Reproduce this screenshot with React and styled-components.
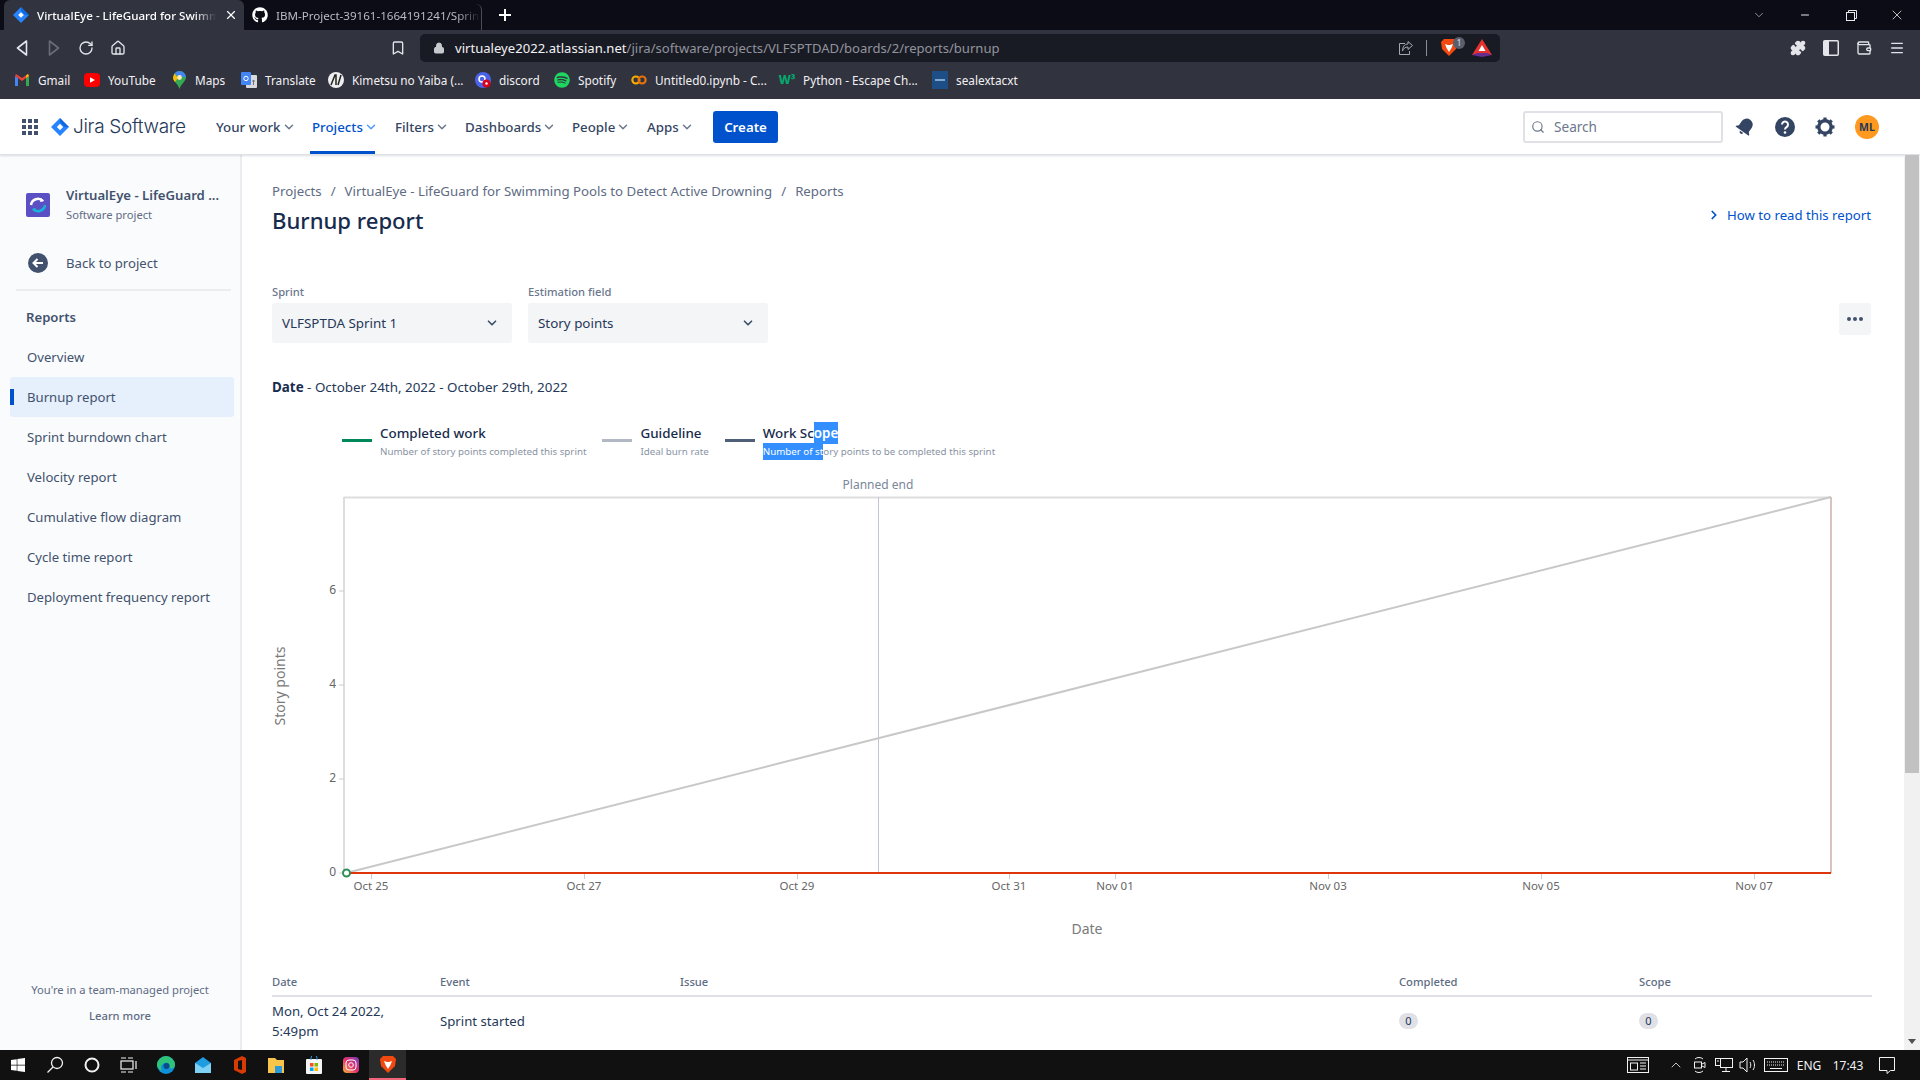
import React from 'react'
import styled, { createGlobalStyle } from 'styled-components'
import { FaGithub, FaSpotify, FaWindows } from 'react-icons/fa'
import { ChevronDown, ChevronRight, Minus, X, Search, RotateCw, Home, Bookmark, Lock, Puzzle, Wallet, Menu } from 'lucide-react'

const GlobalStyle = createGlobalStyle`
  html, body { margin: 0; height: 100%; overflow: hidden; background: #fff; }
  #root { height: 100%; }
  * { box-sizing: border-box; }
  body { font-family: "Noto Sans", "Open Sans", "Liberation Sans", sans-serif; color: #172b4d; }
`

const Page = styled.div`
  height: 1080px;
  display: flex;
  flex-direction: column;
  font-size: 13.4px;
`

/* browser chrome */
const TabStrip = styled.div`
  height: 30px;
  background: #0b0c15;
  display: flex;
  align-items: flex-end;
  padding-left: 4px;
  color: #fff;
  font-size: 11.6px;
`
const Tab = styled.div`
  width: ${p => p.$w}px;
  height: ${p => (p.$active ? 30 : 26)}px;
  border-radius: 6px 6px 0 0;
  background: ${p => (p.$active ? '#31333f' : 'transparent')};
  color: ${p => (p.$active ? '#fff' : '#b9bbc4')};
  display: flex;
  align-items: center;
  gap: 8px;
  padding: ${p => (p.$active ? '0 6px 0 9px' : '0 0 4px 8px')};
  white-space: nowrap;
  border-right: ${p => (p.$active ? 'none' : '1px solid #4a4c57')};
`
const TabTitle = styled.span`
  flex: 1;
  overflow: hidden;
  -webkit-mask-image: linear-gradient(to right, #000 88%, transparent);
  mask-image: linear-gradient(to right, #000 88%, transparent);
  font-weight: ${p => (p.$active ? 500 : 400)};
`
const NewTab = styled.div`
  margin-left: 16px;
  height: 30px;
  display: flex;
  align-items: center;
`
const WindowControls = styled.div`
  margin-left: auto;
  height: 30px;
  display: flex;
  align-items: center;
  color: #e8e8ea;
`
const WinButton = styled.div`
  width: 46px;
  display: flex;
  justify-content: center;
`
const Toolbar = styled.div`
  height: 32px;
  background: #31333f;
  display: flex;
  align-items: flex-end;
  padding-left: 12px;
  color: #e4e5ea;
`
const NavButtons = styled.div`
  display: flex;
  width: 408px;
  height: 28px;
  align-items: center;
  gap: 12px;
`
const ToolIcon = styled.div`
  width: 20px;
  height: 20px;
  display: flex;
  align-items: center;
  justify-content: center;
  color: ${p => (p.$dim ? '#6a6c78' : '#e4e5ea')};
`
const BookmarkBtn = styled(ToolIcon)`
  margin-left: auto;
  margin-right: 12px;
`
const UrlBar = styled.div`
  width: 1080px;
  height: 28px;
  background: #191b24;
  border-radius: 5px;
  display: flex;
  align-items: center;
  padding: 0 8px 0 13px;
  font-size: 13.1px;
  color: #92949d;
  gap: 10px;
`
const Host = styled.span`
  color: #f2f2f4;
`
const UrlEnd = styled.div`
  margin-left: auto;
  display: flex;
  align-items: center;
  gap: 12px;
`
const UrlDivider = styled.div`
  width: 1px;
  height: 16px;
  background: #8b8d96;
`
const Shield = styled.div`
  position: relative;
  width: 20px;
  height: 20px;
  margin-left: 1px;
`
const ShieldBadge = styled.div`
  position: absolute;
  right: -5px;
  top: -1px;
  width: 12px;
  height: 12px;
  border-radius: 50%;
  background: #5c5e6b;
  color: #dfe0ff;
  font-size: 8px;
  line-height: 12px;
  text-align: center;
`
const ExtIcons = styled.div`
  display: flex;
  align-items: center;
  height: 28px;
  gap: 13px;
  margin-left: 288px;
`
const Bookmarks = styled.div`
  height: 37px;
  background: #31333f;
  display: flex;
  align-items: center;
  padding: 0 0 2px 14px;
  color: #f1f1f3;
  font-size: 11.8px;
  white-space: nowrap;
`
const BookmarkItem = styled.div`
  width: ${p => p.$w}px;
  display: flex;
  align-items: center;
  gap: 8px;
`
const BookmarkGlyph = styled.span`
  width: 16px;
  height: 16px;
  display: flex;
  align-items: center;
  justify-content: center;
  flex-shrink: 0;
`
const W3 = styled.span`
  color: #04aa6d;
  font-size: 12px;
  font-weight: 800;
`

/* jira top nav */
const TopNav = styled.header`
  height: 56px;
  flex-shrink: 0;
  display: flex;
  align-items: center;
  padding-left: 22px;
  position: relative;
  border-bottom: 1px solid #dfe1e6;
  box-shadow: 0 1px 2px rgba(9, 30, 66, 0.14);
  z-index: 2;
  background: #fff;
`
const AppGrid = styled.div`
  display: grid;
  grid-template-columns: repeat(3, 4px);
  gap: 2px;
  width: 16px;
  margin-right: 13px;
`
const AppDot = styled.span`
  width: 4px;
  height: 4px;
  background: #42526e;
`
const Logo = styled.div`
  display: flex;
  align-items: center;
  gap: 4px;
  width: 165px;
  color: #253858;
  font-size: 19px;
  letter-spacing: -0.3px;
  font-family: "Inter", "Noto Sans", sans-serif;
  font-weight: 300;
`
const MenuItem = styled.div`
  height: 55px;
  width: ${p => p.$w}px;
  display: flex;
  align-items: center;
  gap: 1px;
  position: relative;
  color: ${p => (p.$active ? '#0052cc' : '#344563')};
  font-weight: 500;
  font-size: 13.3px;
  svg { color: ${p => (p.$active ? '#4c9aff' : '#6b778c')}; }
  &::after {
    content: '';
    display: ${p => (p.$active ? 'block' : 'none')};
    position: absolute;
    left: -2px;
    width: 65px;
    bottom: 0;
    height: 3px;
    background: #0052cc;
  }
`
const CreateButton = styled.button`
  width: 65px;
  height: 32px;
  margin-left: 0;
  border: 0;
  border-radius: 3px;
  background: #0052cc;
  color: #fff;
  font: 600 13.3px "Noto Sans", sans-serif;
`
const NavRight = styled.div`
  margin-left: auto;
  display: flex;
  align-items: center;
  padding-right: 41px;
`
const SearchBox = styled.div`
  width: 200px;
  height: 32px;
  border: 2px solid #dfe1e6;
  border-radius: 3px;
  display: flex;
  align-items: center;
  padding-left: 6px;
  gap: 9px;
  color: #6b778c;
  font-size: 13.6px;
  margin-right: 2px;
`
const NavIcon = styled.div`
  width: 40px;
  display: flex;
  justify-content: center;
  color: #344563;
`
const Avatar = styled.div`
  width: 24px;
  height: 24px;
  border-radius: 50%;
  background: #ff991f;
  color: #253858;
  margin-left: 10px;
  font-size: 10.5px;
  font-weight: 700;
  display: flex;
  align-items: center;
  justify-content: center;
`

/* body */
const Body = styled.div`
  height: 895px;
  display: flex;
  overflow: hidden;
`
const Sidebar = styled.aside`
  width: 242px;
  flex-shrink: 0;
  background: #fafbfc;
  border-right: 2px solid #ebecf0;
  display: flex;
  flex-direction: column;
  padding-top: 30px;
  font-size: 13.15px;
  color: #42526e;
`
const ProjectRow = styled.div`
  display: flex;
  align-items: center;
  gap: 16px;
  padding-left: 26px;
`
const ProjectName = styled.div`
  font-weight: 600;
  line-height: 20px;
  white-space: nowrap;
`
const ProjectType = styled.div`
  font-size: 11.2px;
  line-height: 20px;
  color: #5e6c84;
`
const BackRow = styled.div`
  margin-top: 28px;
  display: flex;
  align-items: center;
  gap: 18px;
  padding-left: 28px;
  height: 20px;
`
const SideDivider = styled.div`
  height: 2px;
  margin: 16px 9px 16px 16px;
  background: #ebecf0;
`
const SectionTitle = styled.div`
  font-weight: 600;
  padding-left: 26px;
  line-height: 20px;
  margin-bottom: 10px;
`
const SideItem = styled.div`
  height: 40px;
  margin: 0 6px 0 10px;
  padding-left: 17px;
  display: flex;
  align-items: center;
  border-radius: 3px;
  position: relative;
  background: ${p => (p.$active ? '#e6effc' : 'transparent')};
  &::before {
    content: '';
    display: ${p => (p.$active ? 'block' : 'none')};
    position: absolute;
    left: 0;
    top: 12px;
    width: 4px;
    height: 16px;
    background: #0052cc;
  }
`
const SideFooter = styled.div`
  margin-top: auto;
  padding-bottom: 27px;
  text-align: center;
  font-size: 11.2px;
  color: #5e6c84;
`
const LearnMore = styled.div`
  margin-top: 11px;
  font-weight: 500;
`
const Main = styled.main`
  flex: 1;
  min-width: 0;
  padding: 26px 32px 0 30px;
  overflow: hidden;
`
const HeaderRow = styled.div`
  display: flex;
  justify-content: space-between;
  align-items: flex-end;
`
const Breadcrumbs = styled.div`
  display: flex;
  gap: 9px;
  font-size: 13.25px;
  line-height: 20px;
  color: #5e6c84;
`
const Title = styled.h1`
  margin: 3px 0 1px;
  font-size: 22.1px;
  line-height: 32px;
  font-weight: 500;
  color: #172b4d;
`
const HelpLink = styled.div`
  display: flex;
  align-items: center;
  gap: 6px;
  margin: 0 1px 13px 0;
  font-size: 13.2px;
  color: #0052cc;
`
const FilterRow = styled.div`
  margin-top: 46px;
  display: flex;
  gap: 16px;
`
const Field = styled.div`
  width: 240px;
`
const FieldLabel = styled.div`
  font-size: 11.2px;
  line-height: 18px;
  margin-bottom: 2px;
  font-weight: 500;
  color: #6b778c;
`
const Select = styled.div`
  height: 40px;
  border-radius: 3px;
  background: #f4f5f7;
  display: flex;
  align-items: center;
  justify-content: space-between;
  padding: 0 13px 0 10px;
  color: #253858;
`
const MoreButton = styled.div`
  margin: 20px 1px 0 auto;
  width: 32px;
  height: 32px;
  border-radius: 3px;
  background: #f4f5f7;
  display: flex;
  align-items: center;
  justify-content: center;
  gap: 2px;
`
const MoreDot = styled.span`
  width: 4px;
  height: 4px;
  border-radius: 50%;
  background: #42526e;
`
const DateLine = styled.div`
  margin-top: 34px;
  line-height: 20px;
  color: #253858;
  b { font-weight: 700; color: #172b4d; }
`
const Legend = styled.div`
  margin: 26px 0 0 70px;
  display: flex;
  gap: 16px;
`
const LegendItem = styled.div`
  display: flex;
  gap: 8px;
`
const LegendSwatch = styled.div`
  width: 30px;
  height: 3px;
  margin-top: 16px;
  background: ${p => p.$color};
`
const LegendName = styled.div`
  font-weight: 500;
  font-size: 13.4px;
  line-height: 20px;
  color: #172b4d;
`
const LegendHint = styled.div`
  font-size: 9.75px;
  line-height: 16px;
  margin-top: 1px;
  color: #8993a4;
`
const Selected = styled.span`
  background: #338fff;
  color: #fff;
  padding: 2px 0;
  font-weight: ${p => p.$bold ? 600 : 400};
`
const ChartSvg = styled.svg`
  display: block;
  margin-top: 12px;
`
const EventGrid = styled.div`
  display: grid;
  grid-template-columns: 168px 240px 719px 240px 1fr;
  align-items: center;
  margin-top: 2px;
`
const HeadCell = styled.div`
  font-size: 11.2px;
  font-weight: 500;
  color: #5e6c84;
  height: 25px;
  line-height: 20px;
  border-bottom: 2px solid #dfe1e6;
`
const Cell = styled.div`
  min-height: 48px;
  line-height: 20px;
  font-size: 13.2px;
  display: flex;
  align-items: center;
  color: #253858;
`
const Count = styled.span`
  width: 19px;
  height: 16px;
  border-radius: 8px;
  background: #dfe1e6;
  font-size: 11px;
  line-height: 16px;
  text-align: center;
`
const Scrollbar = styled.div`
  width: 16px;
  flex-shrink: 0;
  background: #f1f1f1;
  display: flex;
  flex-direction: column;
  align-items: center;
  z-index: 3;
  position: relative;
  margin-top: -56px;
`
const ScrollArrow = styled.div`
  height: 17px;
  display: flex;
  align-items: center;
  justify-content: center;
`
const ScrollThumb = styled.div`
  width: 14px;
  height: 657px;
  background: #c1c1c1;
`
const Spacer = styled.div`
  flex: 1;
`

/* windows taskbar */
const Taskbar = styled.footer`
  height: 30px;
  background: #111;
  display: flex;
  align-items: center;
  color: #f2f2f2;
  font-size: 12px;
  position: relative;
  z-index: 4;
`
const TaskIcon = styled.div`
  width: 37px;
  height: 30px;
  display: flex;
  align-items: center;
  justify-content: center;
  background: ${p => (p.$open ? '#2b2b2b' : 'transparent')};
  border-bottom: ${p => (p.$open ? '2px solid #f0657a' : 'none')};
`
const TaskLeft = styled.div`
  display: flex;
  margin-left: -1px;
`
const TaskRight = styled.div`
  margin-left: auto;
  display: flex;
  align-items: center;
  padding-right: 16px;
`
const Tray = styled.div`
  width: ${p => p.$w}px;
  display: flex;
  justify-content: center;
  align-items: center;
`

const JiraMark = ({ size = 16, color = '#2684ff' }) => (
  <svg width={size} height={size} viewBox="0 0 16 16">
    <path d="M8 0 16 8 8 16 0 8Z" fill={color} />
    <path d="M8 5.2 10.8 8 8 10.8 5.2 8Z" fill="#fff" />
    <path d="M8 0 16 8 12 8 8 4Z" fill="#0052cc" opacity=".55" />
  </svg>
)

const Gmail = () => (
  <svg width="16" height="14" viewBox="0 0 16 14">
    <path d="M1 13V3l3 2v8z" fill="#4285f4" />
    <path d="M15 13V3l-3 2v8z" fill="#34a853" />
    <path d="M1 3 8 8l7-5-1-2-6 4-6-4z" fill="#ea4335" />
    <path d="M12 5l3-2-1-2-2 1.4z" fill="#fbbc04" />
  </svg>
)
const YouTube = () => (
  <svg width="16" height="16" viewBox="0 0 16 16">
    <rect y="1" width="16" height="14" rx="4" fill="#f00" />
    <path d="M6 5.2v5.6L11 8z" fill="#fff" />
  </svg>
)
const MapsPin = () => (
  <svg width="13" height="18" viewBox="0 0 13 18">
    <path d="M6.5 0A6.5 6.5 0 0 1 13 6.5C13 10 8 13 6.5 18 5 13 0 10 0 6.5A6.5 6.5 0 0 1 6.5 0Z" fill="#34a853" />
    <path d="M6.5 0A6.5 6.5 0 0 1 13 6.5L1 4A6.5 6.5 0 0 1 6.5 0Z" fill="#4285f4" />
    <path d="M1.5 2.5 0 6.5C0 8 1 10 2 11l3-4z" fill="#fbbc04" />
    <circle cx="6.5" cy="6.5" r="2.4" fill="#ffe9b5" />
  </svg>
)
const Translate = () => (
  <svg width="16" height="16" viewBox="0 0 16 16">
    <rect x="5" y="3" width="11" height="13" rx="1" fill="#d8dadf" />
    <rect width="10" height="13" rx="1" fill="#4285f4" />
    <circle cx="5" cy="6.5" r="2.2" fill="none" stroke="#fff" />
    <path d="M11 9h3M12.5 8v5" stroke="#70757a" />
  </svg>
)
const Kimetsu = () => (
  <svg width="16" height="16" viewBox="0 0 16 16">
    <circle cx="8" cy="8" r="8" fill="#eee" />
    <path d="M3 13 7 3h1v10M13 3l-3 10" stroke="#222" strokeWidth="1.5" fill="none" />
  </svg>
)
const Discord = () => (
  <svg width="16" height="16" viewBox="0 0 16 16">
    <circle cx="8" cy="8" r="8" fill="#4a63e8" />
    <circle cx="7" cy="7" r="3" fill="none" stroke="#fff" strokeWidth="1.5" />
    <circle cx="11.5" cy="11.5" r="4" fill="#d8001c" />
    <circle cx="11.5" cy="11.5" r="1.2" fill="#fff" />
  </svg>
)
const Colab = () => (
  <svg width="18" height="12" viewBox="0 0 18 12">
    <circle cx="5.5" cy="6" r="4" fill="none" stroke="#f9ab00" strokeWidth="2.4" />
    <circle cx="12.5" cy="6" r="4" fill="none" stroke="#e8710a" strokeWidth="2.4" />
  </svg>
)
const Seal = () => (
  <svg width="16" height="18" viewBox="0 0 16 18">
    <rect width="16" height="18" fill="#1d4f86" />
    <rect x="3" y="8" width="10" height="2" fill="#7fa6cc" />
  </svg>
)
const BraveLion = ({ size = 18 }) => (
  <svg width={size} height={size} viewBox="0 0 18 18">
    <path d="M4 1h10l3 3-1 7-7 7-7-7-1-7z" fill="#f1490f" />
    <path d="M5 6l3 1h2l3-1-1.5 4L9 14l-2.500-4z" fill="#fff" />
  </svg>
)
const BatTriangle = () => (
  <svg width="20" height="18" viewBox="0 0 20 18">
    <path d="M10 0 20 16H0z" fill="#e5322d" />
    <path d="M0 16 10 18l10-2-5-2H5z" fill="#662d91" />
    <path d="M10 6l3.500 6h-7z" fill="#fff" />
  </svg>
)
const ShareBox = () => (
  <svg width="16" height="16" viewBox="0 0 16 16" fill="none" stroke="#a6a8b0">
    <path d="M7 3.500H1.500v11h10V11" />
    <path d="M10 1.500 14.500 5.500 10 9.500V7C7 7 5.500 8.500 4.500 11 4.500 7 6.500 4 10 4Z" />
  </svg>
)
const BackTriangle = ({ color = '#e4e5ea' }) => (
  <svg width="12" height="16" viewBox="0 0 12 16">
    <path d="M10.500 1 1.500 8l9 7z" fill="none" stroke={color} strokeWidth="1.600" strokeLinejoin="round" />
  </svg>
)
const SideToggle = () => (
  <svg width="16" height="16" viewBox="0 0 16 16">
    <rect x=".75" y=".75" width="14.500" height="14.500" rx="1" fill="none" stroke="#e4e5ea" strokeWidth="1.500" />
    <rect x="1" y="1" width="5" height="14" fill="#e4e5ea" />
  </svg>
)
const RestoreIcon = () => (
  <svg width="11" height="11" viewBox="0 0 11 11" fill="none" stroke="currentColor">
    <rect x=".5" y="2.500" width="8" height="8" />
    <path d="M2.500 2.500v-2h8v8h-2" />
  </svg>
)
const Bell = () => (
  <svg width="20" height="20" viewBox="0 0 20 20">
    <g transform="rotate(35 10 10)" fill="#344563">
      <path d="M10 1a6 6 0 0 1 6 6v5l2 2v1H2v-1l2-2V7a6 6 0 0 1 6-6Z" />
      <path d="M8 16h4a2 2 0 0 1-4 0Z" />
    </g>
  </svg>
)
const Help = () => (
  <svg width="20" height="20" viewBox="0 0 20 20">
    <circle cx="10" cy="10" r="10" fill="#344563" />
    <path d="M7 7.500a3 3 0 1 1 4.500 2.600c-1 .6-1.500 1-1.500 2.400" fill="none" stroke="#fff" strokeWidth="2" />
    <circle cx="10" cy="15.500" r="1.300" fill="#fff" />
  </svg>
)
const Gear = () => (
  <svg width="20" height="20" viewBox="0 0 20 20">
    <circle cx="10" cy="10" r="6.200" fill="none" stroke="#344563" strokeWidth="3.400" />
    <g fill="#344563">
      {[0, 45, 90, 135, 180, 225, 270, 315].map(a => (
        <rect key={a} x="8.400" y="0.500" width="3.200" height="3.500" transform={`rotate(${a} 10 10)`} />
      ))}
    </g>
  </svg>
)
const ProjectIcon = () => (
  <svg width="24" height="24" viewBox="0 0 24 24">
    <rect width="24" height="24" rx="2" fill="#5b4fc4" />
    <path d="M5 12a7 7 0 0 1 12-4" fill="none" stroke="#fff" strokeWidth="2.500" />
    <path d="M15 5l3 3-4 1z" fill="#fff" />
    <path d="M19 12a7 7 0 0 1-12 4" fill="none" stroke="#18b4d8" strokeWidth="2.500" />
    <path d="M9 19l-3-3 4-1z" fill="#18b4d8" />
  </svg>
)
const BackCircle = () => (
  <svg width="20" height="20" viewBox="0 0 20 20">
    <circle cx="10" cy="10" r="10" fill="#42526e" />
    <path d="M15 10H6M9.500 6 5.500 10l4 4" fill="none" stroke="#fff" strokeWidth="2" />
  </svg>
)
const Edge = () => (
  <svg width="18" height="18" viewBox="0 0 18 18">
    <circle cx="9" cy="9" r="9" fill="#0f8fd8" />
    <path d="M9 0a9 9 0 0 1 9 9c0 3-3 4-6 3 2-3-1-6-4-5-4 1-5 5-3 8C1 13 0 11 0 9a9 9 0 0 1 9-9Z" fill="#2fc27a" />
    <circle cx="9.500" cy="10" r="3" fill="#0b4a8a" />
  </svg>
)
const Mail = () => (
  <svg width="16" height="16" viewBox="0 0 16 16">
    <path d="M0 6 8 0l8 6v10H0z" fill="#1f9be0" />
    <path d="M0 6l8 5 8-5v10H0z" fill="#7fd0f5" />
  </svg>
)
const Office = () => (
  <svg width="14" height="18" viewBox="0 0 14 18">
    <path d="M1 4 9 0l4 2v14l-4 2-8-4z" fill="#d83b01" />
    <path d="M5 5l4-1v10l-4-1z" fill="#111" />
  </svg>
)
const Files = () => (
  <svg width="18" height="16" viewBox="0 0 18 16">
    <path d="M0 1h7l2 2h7v13H0z" fill="#f7c54a" />
    <rect x="7" y="9" width="7" height="7" fill="#2a9ad8" />
  </svg>
)
const Store = () => (
  <svg width="16" height="18" viewBox="0 0 16 18">
    <rect y="3" width="16" height="15" rx="1" fill="#f5f5f5" />
    <path d="M5 4V2a3 3 0 0 1 6 0v2" fill="none" stroke="#2a9ad8" />
    <rect x="4" y="7" width="3.500" height="3.500" fill="#f25022" />
    <rect x="8.500" y="7" width="3.500" height="3.500" fill="#7fba00" />
    <rect x="4" y="11.500" width="3.500" height="3.500" fill="#00a4ef" />
    <rect x="8.500" y="11.500" width="3.500" height="3.500" fill="#ffb900" />
  </svg>
)
const Instagram = () => (
  <svg width="16" height="16" viewBox="0 0 16 16">
    <defs>
      <linearGradient id="insta" x1="0" y1="1" x2="1" y2="0">
        <stop offset="0" stopColor="#fdb33a" />
        <stop offset=".5" stopColor="#e1306c" />
        <stop offset="1" stopColor="#7b3fc4" />
      </linearGradient>
    </defs>
    <rect width="16" height="16" rx="4" fill="url(#insta)" />
    <rect x="3" y="3" width="10" height="10" rx="3" fill="none" stroke="#fff" />
    <circle cx="8" cy="8" r="2.300" fill="none" stroke="#fff" />
  </svg>
)
const Cortana = () => (
  <svg width="16" height="16" viewBox="0 0 16 16">
    <circle cx="8" cy="8" r="6.500" fill="none" stroke="#f2f2f2" strokeWidth="2" />
  </svg>
)
const TaskView = () => (
  <svg width="18" height="18" viewBox="0 0 18 18" fill="none" stroke="#f2f2f2" strokeWidth="1.200">
    <rect x="1" y="5" width="12" height="8" />
    <path d="M1 2h5M8 2h5M1 16h5M8 16h5M16 5v8" />
  </svg>
)
const SearchGlass = () => (
  <svg width="18" height="18" viewBox="0 0 18 18" fill="none" stroke="#f2f2f2" strokeWidth="1.300">
    <circle cx="11" cy="7" r="5.500" />
    <path d="M7 11 1.500 16.500" />
  </svg>
)
const News = () => (
  <svg width="22" height="18" viewBox="0 0 22 18" fill="none" stroke="#f2f2f2">
    <rect x=".5" y="1.500" width="21" height="15" />
    <path d="M.5 4h21" />
    <rect x="3.500" y="7" width="7" height="7" />
    <path d="M13 7h6M13 10h6M13 13h6" />
  </svg>
)
const MeetIcon = () => (
  <svg width="14" height="18" viewBox="0 0 14 18" fill="none" stroke="#f2f2f2">
    <path d="M2 3a6 6 0 0 1 8 0M2 15a6 6 0 0 0 8 0" />
    <rect x="1.500" y="6" width="7" height="6" />
    <path d="M9 8l3-1.500v5L9 10" />
  </svg>
)
const NetworkIcon = () => (
  <svg width="18" height="18" viewBox="0 0 18 18" fill="none" stroke="#f2f2f2">
    <rect x="5.500" y="2.500" width="12" height="9" />
    <rect x=".5" y="2.500" width="5" height="7" fill="#111" />
    <path d="M11 11.500v4M7 15.500h8M2 5h2" />
  </svg>
)
const VolumeIcon = () => (
  <svg width="18" height="16" viewBox="0 0 18 16" fill="none" stroke="#f2f2f2">
    <path d="M1 5h3l4-4v14l-4-4H1zM11 5c1 2 1 4 0 6M14 3c2 3 2 7 0 10" />
  </svg>
)
const Keyboard = () => (
  <svg width="24" height="14" viewBox="0 0 24 14" fill="none" stroke="#f2f2f2">
    <rect x=".5" y=".5" width="23" height="13" />
    <path d="M3 4h18M3 7h18" strokeDasharray="1 1" />
    <path d="M6 10.500h12" />
  </svg>
)
const Notify = () => (
  <svg width="18" height="18" viewBox="0 0 18 18" fill="none" stroke="#f2f2f2">
    <path d="M1.500 1.500h15v13h-4l-3.500 3-0-3h-7.500z" />
  </svg>
)

const bookmarkItems = [
  { w: 70, label: 'Gmail', icon: <Gmail /> },
  { w: 87, label: 'YouTube', icon: <YouTube /> },
  { w: 70, label: 'Maps', icon: <MapsPin /> },
  { w: 87, label: 'Translate', icon: <Translate /> },
  { w: 147, label: 'Kimetsu no Yaiba (...', icon: <Kimetsu /> },
  { w: 79, label: 'discord', icon: <Discord /> },
  { w: 77, label: 'Spotify', icon: <FaSpotify size={16} color="#1ed760" /> },
  { w: 148, label: 'Untitled0.ipynb - C...', icon: <Colab /> },
  { w: 153, label: 'Python - Escape Ch...', icon: <W3>W³</W3> },
  { w: 100, label: 'sealextacxt', icon: <Seal /> },
]
const menuItems = [
  { w: 96, label: 'Your work' },
  { w: 83, label: 'Projects', active: true },
  { w: 70, label: 'Filters' },
  { w: 107, label: 'Dashboards' },
  { w: 75, label: 'People' },
  { w: 66, label: 'Apps' },
]
const reportLinks = ['Overview', 'Burnup report', 'Sprint burndown chart', 'Velocity report', 'Cumulative flow diagram', 'Cycle time report', 'Deployment frequency report']
const xTicks = [[371, 'Oct 25'], [584, 'Oct 27'], [797, 'Oct 29'], [1009, 'Oct 31'], [1115, 'Nov 01'], [1328, 'Nov 03'], [1541, 'Nov 05'], [1754, 'Nov 07']]
const yTicks = [[873, '0'], [779, '2'], [685, '4'], [591, '6']]

const BurnupChart = () => (
  <ChartSvg width="1600" height="498" viewBox="272 472 1600 498" fontFamily='"Noto Sans", sans-serif'>
    <text x="878" y="489" fontSize="12" fill="#7a869a" textAnchor="middle">Planned end</text>
    <path d="M344 497.500H1831" stroke="#ddd" strokeWidth="2" />
    <path d="M344 497V873" stroke="#ddd" strokeWidth="2" />
    <path d="M1831 497V873" stroke="#d9c4bd" strokeWidth="2" />
    <path d="M878.500 497V873" stroke="#c1c7d0" />
    {yTicks.map(([y, label]) => (
      <g key={label}>
        <path d={`M339 ${y}H344`} stroke="#ccc" />
        <text x="336" y={y + 3} fontSize="12" fill="#666" textAnchor="end">{label}</text>
      </g>
    ))}
    {xTicks.map(([x, label]) => (
      <g key={label}>
        <path d={`M${x + 0.5} 873V879`} stroke="#ccc" />
        <text x={x} y="890" fontSize="11.500" fill="#666" textAnchor="middle">{label}</text>
      </g>
    ))}
    <path d="M346 873 1831 497" stroke="#c8c8c8" strokeWidth="2" fill="none" />
    <path d="M346 873H1831" stroke="#de350b" strokeWidth="2" />
    <circle cx="346.500" cy="873" r="3.500" fill="#fff" stroke="#2f8f5b" strokeWidth="2" />
    <text x="1087" y="934" fontSize="14" fill="#7a7a7a" textAnchor="middle">Date</text>
    <text transform="translate(285 686) rotate(-90)" fontSize="14" fill="#7a7a7a" textAnchor="middle">Story points</text>
  </ChartSvg>
)

export default function App() {
  return (
    <Page>
      <GlobalStyle />
      <TabStrip>
        <Tab $active $w={240}>
          <JiraMark />
          <TabTitle $active>VirtualEye - LifeGuard for Swimming Pools</TabTitle>
          <X size={14} />
        </Tab>
        <Tab $w={238}>
          <FaGithub size={16} color="#fff" />
          <TabTitle>IBM-Project-39161-1664191241/Sprint-1</TabTitle>
        </Tab>
        <NewTab><svg width="14" height="14" viewBox="0 0 14 14"><path d="M7 1v12M1 7h12" stroke="#fff" strokeWidth="2" /></svg></NewTab>
        <WindowControls>
          <WinButton><ChevronDown size={14} strokeWidth={1} /></WinButton>
          <WinButton><Minus size={12} /></WinButton>
          <WinButton><RestoreIcon /></WinButton>
          <WinButton><X size={16} strokeWidth={1.200} /></WinButton>
        </WindowControls>
      </TabStrip>
      <Toolbar>
        <NavButtons>
          <ToolIcon><BackTriangle /></ToolIcon>
          <ToolIcon $dim><span style={{ display: 'flex', transform: 'scaleX(-1)' }}><BackTriangle color="#6a6c78" /></span></ToolIcon>
          <ToolIcon><RotateCw size={16} /></ToolIcon>
          <ToolIcon><Home size={16} /></ToolIcon>
          <BookmarkBtn><Bookmark size={16} /></BookmarkBtn>
        </NavButtons>
        <UrlBar>
          <Lock size={12} fill="#c8c9cf" color="#c8c9cf" />
          <span><Host>virtualeye2022.atlassian.net</Host>/jira/software/projects/VLFSPTDAD/boards/2/reports/burnup</span>
          <UrlEnd>
            <ShareBox />
            <UrlDivider />
            <Shield>
              <BraveLion />
              <ShieldBadge>1</ShieldBadge>
            </Shield>
            <BatTriangle />
          </UrlEnd>
        </UrlBar>
        <ExtIcons>
          <ToolIcon><Puzzle size={16} fill="#e4e5ea" /></ToolIcon>
          <ToolIcon><SideToggle /></ToolIcon>
          <ToolIcon><Wallet size={16} /></ToolIcon>
          <ToolIcon><Menu size={16} /></ToolIcon>
        </ExtIcons>
      </Toolbar>
      <Bookmarks>
        {bookmarkItems.map(b => (
          <BookmarkItem key={b.label} $w={b.w}>
            <BookmarkGlyph>{b.icon}</BookmarkGlyph>
            {b.label}
          </BookmarkItem>
        ))}
      </Bookmarks>
      <TopNav>
        <AppGrid>{Array.from({ length: 9 }).map((_, i) => <AppDot key={i} />)}</AppGrid>
        <Logo><JiraMark size={18} />Jira Software</Logo>
        {menuItems.map(m => (
          <MenuItem key={m.label} $w={m.w} $active={m.active}>
            {m.label}<ChevronDown size={14} strokeWidth={2.500} />
          </MenuItem>
        ))}
        <CreateButton>Create</CreateButton>
        <NavRight>
          <SearchBox><Search size={14} />Search</SearchBox>
          <NavIcon><Bell /></NavIcon>
          <NavIcon><Help /></NavIcon>
          <NavIcon><Gear /></NavIcon>
          <Avatar>ML</Avatar>
        </NavRight>
      </TopNav>
      <Body>
        <Sidebar>
          <ProjectRow>
            <ProjectIcon />
            <div>
              <ProjectName>VirtualEye - LifeGuard ...</ProjectName>
              <ProjectType>Software project</ProjectType>
            </div>
          </ProjectRow>
          <BackRow><BackCircle />Back to project</BackRow>
          <SideDivider />
          <SectionTitle>Reports</SectionTitle>
          {reportLinks.map(r => <SideItem key={r} $active={r === 'Burnup report'}>{r}</SideItem>)}
          <SideFooter>
            You're in a team-managed project
            <LearnMore>Learn more</LearnMore>
          </SideFooter>
        </Sidebar>
        <Main>
          <HeaderRow>
            <div>
              <Breadcrumbs>
                <span>Projects</span><span>/</span>
                <span>VirtualEye - LifeGuard for Swimming Pools to Detect Active Drowning</span><span>/</span>
                <span>Reports</span>
              </Breadcrumbs>
              <Title>Burnup report</Title>
            </div>
            <HelpLink><ChevronRight size={14} strokeWidth={3} />How to read this report</HelpLink>
          </HeaderRow>
          <FilterRow>
            <Field>
              <FieldLabel>Sprint</FieldLabel>
              <Select>VLFSPTDA Sprint 1<ChevronDown size={14} strokeWidth={3} color="#42526e" /></Select>
            </Field>
            <Field>
              <FieldLabel>Estimation field</FieldLabel>
              <Select>Story points<ChevronDown size={14} strokeWidth={3} color="#42526e" /></Select>
            </Field>
            <MoreButton><MoreDot /><MoreDot /><MoreDot /></MoreButton>
          </FilterRow>
          <DateLine><b>Date</b> - October 24th, 2022 - October 29th, 2022</DateLine>
          <Legend>
            <LegendItem>
              <LegendSwatch $color="#00875a" />
              <div>
                <LegendName>Completed work</LegendName>
                <LegendHint>Number of story points completed this sprint</LegendHint>
              </div>
            </LegendItem>
            <LegendItem>
              <LegendSwatch $color="#b3b9c4" />
              <div>
                <LegendName>Guideline</LegendName>
                <LegendHint>Ideal burn rate</LegendHint>
              </div>
            </LegendItem>
            <LegendItem>
              <LegendSwatch $color="#505f79" />
              <div>
                <LegendName>Work Sc<Selected $bold>ope</Selected></LegendName>
                <LegendHint><Selected>Number of st</Selected>ory points to be completed this sprint</LegendHint>
              </div>
            </LegendItem>
          </Legend>
          <BurnupChart />
          <EventGrid>
            <HeadCell>Date</HeadCell>
            <HeadCell>Event</HeadCell>
            <HeadCell>Issue</HeadCell>
            <HeadCell>Completed</HeadCell>
            <HeadCell>Scope</HeadCell>
            <Cell>Mon, Oct 24 2022,<br />5:49pm</Cell>
            <Cell>Sprint started</Cell>
            <Cell />
            <Cell><Count>0</Count></Cell>
            <Cell><Count>0</Count></Cell>
          </EventGrid>
        </Main>
        <Scrollbar>
          <ScrollArrow><svg width="8" height="5" viewBox="0 0 8 5"><path d="M4 0 8 5H0z" fill="#a3a3a3" /></svg></ScrollArrow>
          <ScrollThumb />
          <Spacer />
          <ScrollArrow><svg width="8" height="5" viewBox="0 0 8 5"><path d="M4 5 8 0H0z" fill="#505050" /></svg></ScrollArrow>
        </Scrollbar>
      </Body>
      <Taskbar>
        <TaskLeft>
          <TaskIcon><FaWindows size={16} color="#fff" /></TaskIcon>
          <TaskIcon><SearchGlass /></TaskIcon>
          <TaskIcon><Cortana /></TaskIcon>
          <TaskIcon><TaskView /></TaskIcon>
          <TaskIcon><Edge /></TaskIcon>
          <TaskIcon><Mail /></TaskIcon>
          <TaskIcon><Office /></TaskIcon>
          <TaskIcon><Files /></TaskIcon>
          <TaskIcon><Store /></TaskIcon>
          <TaskIcon><Instagram /></TaskIcon>
          <TaskIcon $open><BraveLion /></TaskIcon>
        </TaskLeft>
        <TaskRight>
          <Tray $w={51}><News /></Tray>
          <Tray $w={25}><ChevronDown size={16} strokeWidth={1.200} style={{ transform: 'rotate(180deg)' }} /></Tray>
          <Tray $w={24}><MeetIcon /></Tray>
          <Tray $w={24}><NetworkIcon /></Tray>
          <Tray $w={24}><VolumeIcon /></Tray>
          <Tray $w={32}><Keyboard /></Tray>
          <Tray $w={34}>ENG</Tray>
          <Tray $w={44}>17:43</Tray>
          <Tray $w={34}><Notify /></Tray>
        </TaskRight>
      </Taskbar>
    </Page>
  )
}
